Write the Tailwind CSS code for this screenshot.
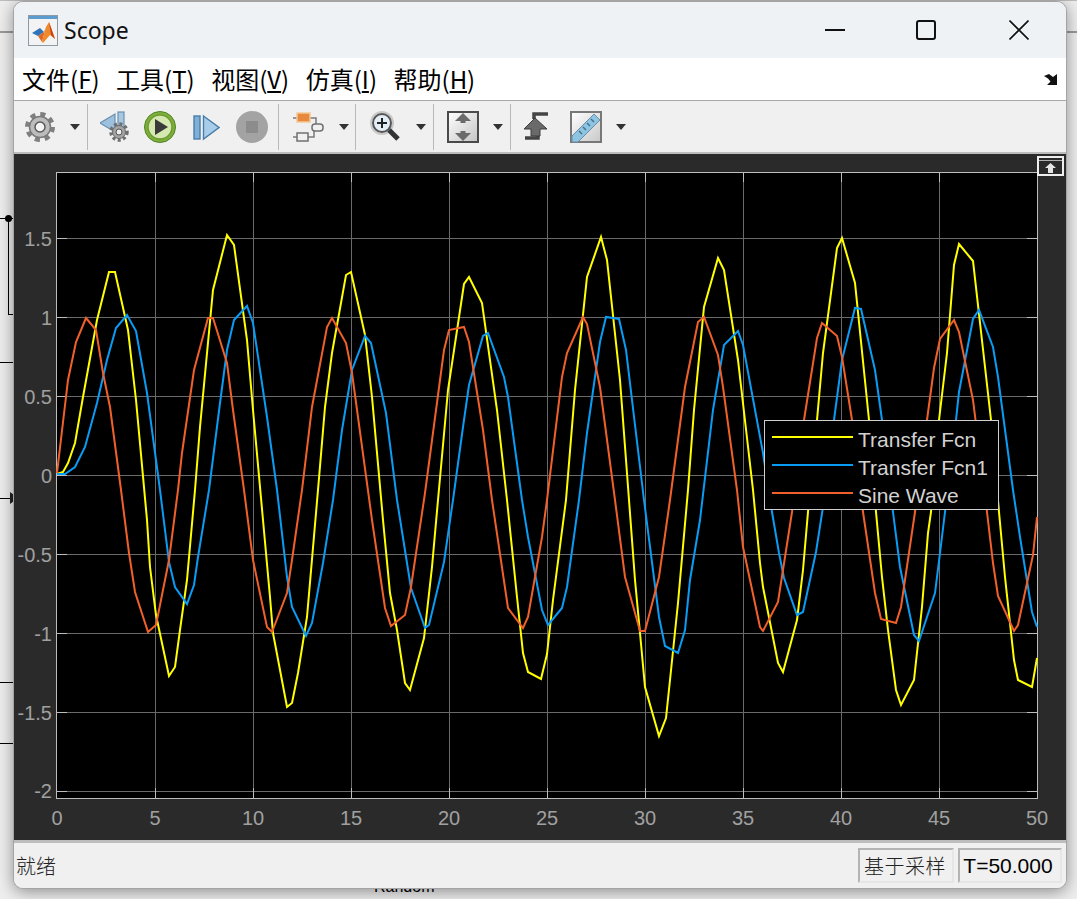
<!DOCTYPE html>
<html lang="en">
<head>
  <meta charset="UTF-8" />
  <title>Scope</title>
  <script src="https://cdn.jsdelivr.net/npm/@tailwindcss/browser@4"></script>
</head>
<body class="relative w-[1077px] h-[899px] overflow-hidden bg-[#eeeeee] font-['Liberation_Sans',sans-serif]">

  <!-- Simulink canvas behind the window -->
  <div class="absolute left-0 top-0 w-full h-[1px] bg-[#bdbdbd]"></div>
  <div class="absolute left-0 top-[31px] w-[14px] h-[2px] bg-[#9a9a9a]"></div>
  <div class="absolute left-[1066px] top-[31px] w-[11px] h-[2px] bg-[#9a9a9a]"></div>
  <div class="absolute left-0 top-[218px] w-[14px] h-[1px] bg-black"></div>
  <div class="absolute left-[5px] top-[215px] w-[7px] h-[7px] rounded-full bg-black"></div>
  <div class="absolute left-[8px] top-[218px] w-[1px] h-[96px] bg-black"></div>
  <div class="absolute left-[8px] top-[314px] w-[6px] h-[1px] bg-black"></div>
  <div class="absolute left-0 top-[362px] w-[14px] h-[1px] bg-black"></div>
  <div class="absolute left-0 top-[498px] w-[14px] h-[1px] bg-black"></div>
  <svg class="absolute left-[10px] top-[492px] w-[4px] h-[12px]" viewBox="0 0 4 12"><polygon points="0,0 4,3 4,9 0,12" fill="#222222"/></svg>
  <div class="absolute left-0 top-[682px] w-[14px] h-[1px] bg-black"></div>
  <div class="absolute left-0 top-[743px] w-[14px] h-[1px] bg-black"></div>
  <div class="absolute left-[374px] top-[877px] text-[16px] leading-[20px] text-black">Random</div>

  <!-- Scope window -->
  <div class="absolute left-[13px] top-[1px] w-[1054px] h-[888px] flex flex-col overflow-hidden rounded-[10px] border border-[#a4a4a4] bg-[#f0f0f0] shadow-[0_3px_16px_rgba(0,0,0,0.4)]">

    <!-- Title bar -->
    <div class="h-[56px] flex items-center bg-[#eef2f5] relative shrink-0">
      <svg class="ml-[14px] mt-[1px] w-[30px] h-[31px]" viewBox="0 0 30 31">
        <rect x="0.5" y="0.5" width="29" height="30" fill="#f3f3f3" stroke="#8b9aa6"/>
        <rect x="1" y="1" width="28" height="3" fill="#5d9ccf"/>
        <polygon points="4,18 12,13 16,17 10,21" fill="#2f74b8"/>
        <polygon points="10,21 16,17 18,12 14,27" fill="#e0662a"/>
        <polygon points="18,12 21,7 27,24 22,20 15,28 14,27" fill="#ee8a2c"/>
        <polygon points="21,7 27,24 23,20" fill="#c8401a"/>
      </svg>
      <span class="ml-[6px] text-[23px] leading-none text-[#111111] font-['Noto_Sans',sans-serif]">Scope</span>
      <svg class="absolute left-[811px] top-[27px] w-[20px] h-[2px]" viewBox="0 0 20 2"><rect width="20" height="2" fill="#111111"/></svg>
      <div class="absolute left-[902px] top-[18px] w-[20px] h-[20px] rounded-[3px] border-2 border-[#111111]"></div>
      <svg class="absolute left-[995px] top-[18px] w-[20px] h-[20px]" viewBox="0 0 20 20"><path d="M0.5 0.5L19.5 19.5M19.5 0.5L0.5 19.5" stroke="#111111" stroke-width="1.6"/></svg>
    </div>

    <!-- Menu bar -->
    <div class="h-[43px] shrink-0 flex items-center gap-[16.5px] pl-[8px] bg-white border-b border-[#a8a8a8] relative text-[24px] leading-none text-black font-['Noto_Sans_CJK_SC',sans-serif]">
      <span>文件(<span class="underline">F</span>)</span>
      <span>工具(<span class="underline">T</span>)</span>
      <span>视图(<span class="underline">V</span>)</span>
      <span>仿真(<span class="underline">I</span>)</span>
      <span>帮助(<span class="underline">H</span>)</span>
      <svg class="absolute left-[1029px] top-[14px] w-[16px] h-[14px]" viewBox="0 0 16 14">
        <path d="M1 4L6 2L10 5L14 2V13H4L7.500 9.500L5 6.500Z" fill="#111111"/>
      </svg>
    </div>

    <!-- Toolbar -->
    <div class="h-[53px] shrink-0 flex items-center bg-[#f0f0f0] border-b-2 border-[#bcbcbc]">
      <svg class="ml-[10px] w-[32px] h-[32px]" viewBox="0 0 32 32">
        <circle cx="16" cy="16" r="12.5" fill="none" stroke="#808080" stroke-width="5" stroke-dasharray="5 4.8"/>
        <circle cx="16" cy="16" r="10.5" fill="#bcbcbc" stroke="#7a7a7a" stroke-width="1.5"/>
        <circle cx="16" cy="16" r="5" fill="#f4f4f4" stroke="#5a5a5a" stroke-width="1.5"/>
      </svg>
      <svg class="ml-[14px] w-[10px] h-[6px]" viewBox="0 0 10 6"><polygon points="0,0 10,0 5,6" fill="#333333"/></svg>
      <div class="ml-[7px] w-[1px] h-[46px] bg-[#b8b8b8]"></div>

      <svg class="ml-[12px] w-[30px] h-[32px]" viewBox="0 0 30 32">
        <polygon points="0,12 15,3 15,21" fill="#9cc0de" stroke="#6c90b0" stroke-width="1.2"/>
        <rect x="18" y="1" width="6" height="15" fill="#a8c8e2" stroke="#6c90b0" stroke-width="1.2"/>
        <circle cx="19" cy="21" r="8" fill="none" stroke="#707070" stroke-width="3.500" stroke-dasharray="3 2.400"/>
        <circle cx="19" cy="21" r="6.500" fill="#a4a4a4" stroke="#6a6a6a"/>
        <circle cx="19" cy="21" r="3" fill="#eeeeee" stroke="#555555"/>
      </svg>
      <svg class="ml-[14px] w-[32px] h-[32px]" viewBox="0 0 32 32">
        <circle cx="16" cy="16" r="15.500" fill="#7fae3a" stroke="#4e8424"/>
        <circle cx="16" cy="16" r="12" fill="#d4e8b0" stroke="#6c9c30" stroke-width="1.500"/>
        <polygon points="11,8 24,16 11,24" fill="#3a3a3a"/>
      </svg>
      <svg class="ml-[17px] w-[27px] h-[32px]" viewBox="0 0 27 32">
        <rect x="1" y="5" width="6" height="23" fill="#7fb0d8" stroke="#4a7ea8" stroke-width="1.400"/>
        <polygon points="10.500,5 26,16.500 10.500,28" fill="#a8cdea" stroke="#4a7ea8" stroke-width="1.400"/>
      </svg>
      <svg class="ml-[16px] w-[32px] h-[32px]" viewBox="0 0 32 32">
        <circle cx="16" cy="16" r="16" fill="#a3a3a3"/>
        <rect x="10" y="10" width="12" height="12" fill="#8c8c8c"/>
      </svg>
      <div class="ml-[10px] w-[1px] h-[46px] bg-[#b8b8b8]"></div>

      <svg class="ml-[14px] w-[32px] h-[32px]" viewBox="0 0 32 32">
        <path d="M0 7H4M17 7H23V13M15 26H21V20M0 26H4" fill="none" stroke="#7a7a7a" stroke-width="1.500"/>
        <rect x="4" y="2" width="13" height="9" fill="#e88a3c" stroke="#f4c896" stroke-width="1.500"/>
        <rect x="19" y="13" width="11" height="7" rx="3" fill="#f0f0f0" stroke="#707070" stroke-width="1.500"/>
        <rect x="4" y="22" width="11" height="8" fill="#f0f0f0" stroke="#707070" stroke-width="1.500"/>
      </svg>
      <svg class="ml-[14px] w-[10px] h-[6px]" viewBox="0 0 10 6"><polygon points="0,0 10,0 5,6" fill="#333333"/></svg>
      <div class="ml-[6px] w-[1px] h-[46px] bg-[#b8b8b8]"></div>

      <svg class="ml-[13px] w-[32px] h-[32px]" viewBox="0 0 32 32">
        <circle cx="13" cy="12" r="11" fill="none" stroke="#c8c8c8" stroke-width="2"/>
        <circle cx="13" cy="12" r="9" fill="#e4eef6" stroke="#555555" stroke-width="2"/>
        <path d="M8 12H18M13 7V17" stroke="#222222" stroke-width="2"/>
        <path d="M20 19L29 28" stroke="#333333" stroke-width="5"/>
      </svg>
      <svg class="ml-[15px] w-[10px] h-[6px]" viewBox="0 0 10 6"><polygon points="0,0 10,0 5,6" fill="#333333"/></svg>
      <div class="ml-[7px] w-[1px] h-[46px] bg-[#b8b8b8]"></div>

      <svg class="ml-[13px] w-[32px] h-[32px]" viewBox="0 0 32 32">
        <defs><linearGradient id="auto" x1="0" y1="0" x2="1" y2="1"><stop offset="0" stop-color="#ffffff"/><stop offset="1" stop-color="#c4c4c4"/></linearGradient></defs>
        <rect x="1" y="1" width="30" height="30" fill="url(#auto)" stroke="#4a4a4a" stroke-width="2"/>
        <polygon points="16,2 24,10 18.500,10 18.500,12 13.500,12 13.500,10 8,10" fill="#6a6a6a"/>
        <polygon points="16,30 24,22 18.500,22 18.500,20 13.500,20 13.500,22 8,22" fill="#6a6a6a"/>
      </svg>
      <svg class="ml-[14px] w-[10px] h-[6px]" viewBox="0 0 10 6"><polygon points="0,0 10,0 5,6" fill="#333333"/></svg>
      <div class="ml-[7px] w-[1px] h-[46px] bg-[#b8b8b8]"></div>

      <svg class="ml-[11px] w-[30px] h-[32px]" viewBox="0 0 30 32">
        <path d="M26 3H12V8M16 22V27H3" fill="none" stroke="#444444" stroke-width="3.500"/>
        <polygon points="13,7 25,18 18,18 18,25 9,25 9,18 2,18" fill="#6a6a6a" stroke="#3c3c3c"/>
      </svg>
      <svg class="ml-[18px] w-[32px] h-[32px]" viewBox="0 0 32 32">
        <defs><linearGradient id="rule" x1="0" y1="0" x2="1" y2="1"><stop offset="0" stop-color="#ffffff"/><stop offset="1" stop-color="#c8c8c8"/></linearGradient></defs>
        <rect x="1" y="1" width="30" height="30" fill="url(#rule)" stroke="#787878" stroke-width="2"/>
        <polygon points="2,25 24,3 30,9 8,31 2,31" fill="#8cc4e4" stroke="#6a8ea4"/>
        <path d="M9 20l3 3M13 16l3 3M17 12l3 3M21 8l3 3" stroke="#4a6a80" stroke-width="1.400"/>
      </svg>
      <svg class="ml-[14px] w-[10px] h-[6px]" viewBox="0 0 10 6"><polygon points="0,0 10,0 5,6" fill="#333333"/></svg>
    </div>

    <!-- Plot panel -->
    <div class="h-[686px] shrink-0 relative bg-[#2a2a2a]">
      <svg class="block w-[1052px] h-[686px]" viewBox="14 154 1052 686">
        <rect x="57" y="172" width="980" height="626" fill="#000000"/>
        <g stroke="#6a6a6a" stroke-width="1" shape-rendering="crispEdges">
          <path d="M155.500 172V798M253.500 172V798M351.500 172V798M449.500 172V798M547.500 172V798M645.500 172V798M743.500 172V798M841.500 172V798M939.500 172V798"/>
          <path d="M57 238.500H1037M57 317.500H1037M57 396.500H1037M57 475.500H1037M57 554.500H1037M57 633.500H1037M57 712.500H1037M57 791.500H1037"/>
        </g>
        <g stroke="#bdbdbd" stroke-width="1" shape-rendering="crispEdges" fill="none">
          <rect x="56.500" y="172.500" width="981" height="625.500"/>
          <path d="M57 238.500h10M57 317.500h10M57 396.500h10M57 475.500h10M57 554.500h10M57 633.500h10M57 712.500h10M57 791.500h10"/>
          <path d="M1037 238.500h-10M1037 317.500h-10M1037 396.500h-10M1037 475.500h-10M1037 554.500h-10M1037 633.500h-10M1037 712.500h-10M1037 791.500h-10"/>
          <path d="M155.500 798v-10M253.500 798v-10M351.500 798v-10M449.500 798v-10M547.500 798v-10M645.500 798v-10M743.500 798v-10M841.500 798v-10M939.500 798v-10"/>
          <path d="M155.500 172v10M253.500 172v10M351.500 172v10M449.500 172v10M547.500 172v10M645.500 172v10M743.500 172v10M841.500 172v10M939.500 172v10"/>
        </g>

        <g fill="none" stroke-width="2" stroke-linejoin="miter">
          <polyline stroke="#ffff00" points="57,474 63,472 68,463 75,443 83,397 97,320 109,272 115,272 128,330 136,400 147,520 150,567 156,615 169,676 175,667 180,630 187,580 195,490 200,427 213,290 227,235 234,245 247,340 253,410 263,520 270,597 273,633 287,707 292,703 298,673 307,617 318,490 325,407 332,353 346,275 351,272 365,335 372,397 383,520 390,593 397,630 405,683 410,690 424,638 432,567 438,500 448,390 464,284 469,277 482,303 497,410 507,500 517,597 523,653 528,672 541,679 547,654 553,600 566,500 575,390 587,277 601,237 607,260 620,380 629,500 635,580 640,633 645,687 659,736 666,718 670,680 678,603 688,490 694,410 704,307 718,258 724,270 738,360 753,490 760,563 763,587 778,663 783,672 797,620 803,570 808,512 817,420 823,353 837,248 842,238 855,283 869,420 876,512 882,577 888,630 896,690 901,705 914,680 922,607 928,533 931,512 939,420 947,353 954,265 959,244 973,261 991,420 999,512 1005,577 1014,660 1018,680 1032,687 1037,658"/>
          <polyline stroke="#0a9cf5" points="57,474 65,474 75,467 85,447 97,403 107,360 116,328 127,315 136,331 147,393 160,490 169,562 175,587 187,604 194,585 198,557 209,490 220,403 227,350 234,320 247,306 253,323 267,417 277,490 287,577 292,607 306,636 312,623 323,563 333,500 342,430 352,370 365,336 371,343 386,413 397,500 407,563 411,588 425,628 429,625 444,562 453,500 463,427 469,385 483,336 488,333 504,377 508,397 522,500 528,537 542,610 548,625 562,608 567,587 579,500 587,433 600,342 606,317 619,319 626,350 644,500 659,617 665,646 678,653 685,630 690,580 700,520 713,410 724,345 738,331 743,345 763,453 772,512 779,553 784,578 797,615 803,612 816,552 823,507 834,420 842,360 855,308 861,309 875,370 882,420 893,512 900,567 914,635 919,641 935,593 940,553 945,512 956,420 959,392 973,319 979,310 993,347 998,377 1013,490 1020,537 1032,612 1037,627"/>
          <polyline stroke="#f0602a" points="57,473 68,380 76,342 86,318 96,330 103,373 110,407 121,490 129,553 135,592 148,632 156,625 169,560 178,490 182,453 194,370 208,318 213,318 227,363 233,410 244,490 253,560 267,627 272,632 287,593 292,560 302,490 312,407 327,327 332,318 346,343 352,373 372,520 385,608 391,626 405,615 411,587 425,493 444,350 449,330 464,327 469,342 483,430 492,500 508,608 523,628 528,617 542,537 547,500 562,377 567,353 583,317 587,324 600,387 615,500 625,577 640,631 645,631 659,577 670,500 685,387 698,322 704,317 718,355 723,387 737,490 743,547 760,627 763,631 778,602 785,557 792,512 804,420 817,338 822,323 837,336 842,357 852,420 863,512 875,593 881,619 896,623 901,607 915,512 927,420 934,368 940,339 954,320 959,332 973,400 987,512 993,563 998,596 1014,631 1018,625 1033,555 1037,517"/>
        </g>

        <g class="fill-[#a0a0a0] text-[20px] font-['Liberation_Sans',sans-serif]" text-anchor="end">
          <text x="52" y="246">1.5</text>
          <text x="52" y="325">1</text>
          <text x="52" y="404">0.5</text>
          <text x="52" y="483">0</text>
          <text x="52" y="562">-0.5</text>
          <text x="52" y="641">-1</text>
          <text x="52" y="720">-1.5</text>
          <text x="52" y="798">-2</text>
        </g>
        <g class="fill-[#a0a0a0] text-[20px] font-['Liberation_Sans',sans-serif]" text-anchor="middle">
          <text x="57" y="825">0</text>
          <text x="155" y="825">5</text>
          <text x="253" y="825">10</text>
          <text x="351" y="825">15</text>
          <text x="449" y="825">20</text>
          <text x="547" y="825">25</text>
          <text x="645" y="825">30</text>
          <text x="743" y="825">35</text>
          <text x="841" y="825">40</text>
          <text x="939" y="825">45</text>
          <text x="1037" y="825">50</text>
        </g>

        <!-- undock button -->
        <rect x="1038" y="157" width="25" height="18" fill="#2a2a2a" stroke="#eeeeee" stroke-width="2"/>
        <path d="M1039 160.500H1062" stroke="#b0b0b0" stroke-width="1"/>
        <polygon points="1050.500,163 1056,168 1053,168 1053,173 1048,173 1048,168 1045,168" fill="#e4e4e4"/>
      </svg>

      <!-- Legend -->
      <div class="absolute left-[750px] top-[266px] w-[235px] h-[90px] border border-[#d0d0d0] bg-black flex flex-col justify-center pt-[5px] text-[21px] leading-[28px] text-[#d2d2d2]">
        <div class="flex items-center"><span class="ml-[7px] mb-[5px] w-[81px] h-[2px] bg-[#ffff00]"></span><span class="ml-[5px]">Transfer Fcn</span></div>
        <div class="flex items-center"><span class="ml-[7px] mb-[5px] w-[81px] h-[2px] bg-[#0a9cf5]"></span><span class="ml-[5px]">Transfer Fcn1</span></div>
        <div class="flex items-center"><span class="ml-[7px] mb-[5px] w-[81px] h-[2px] bg-[#f0602a]"></span><span class="ml-[5px]">Sine Wave</span></div>
      </div>
    </div>

    <!-- Status bar -->
    <div class="flex-1 flex items-start bg-[#f0f0f0] border-t-[3px] border-[#bdbdbd] relative">
      <span class="ml-[2px] mt-[10px] text-[20px] leading-[26px] font-light text-[#222222] font-['Noto_Sans_CJK_SC',sans-serif]">就绪</span>
      <div class="ml-auto mt-[5px] mr-[4px] flex gap-[4px]">
        <div class="w-[96px] h-[35px] flex items-center justify-center pr-[2px] tracking-[0.5px] border-2 border-[#b4b4b4] border-r-[#e6e6e6] border-b-[#e6e6e6] text-[20px] font-light text-[#222222] font-['Noto_Sans_CJK_SC',sans-serif]">基于采样</div>
        <div class="w-[104px] h-[35px] flex items-center justify-center pr-[4px] border-2 border-[#b4b4b4] border-r-[#e6e6e6] border-b-[#e6e6e6] text-[21px] text-black">T=50.000</div>
      </div>
    </div>
  </div>
</body>
</html>
